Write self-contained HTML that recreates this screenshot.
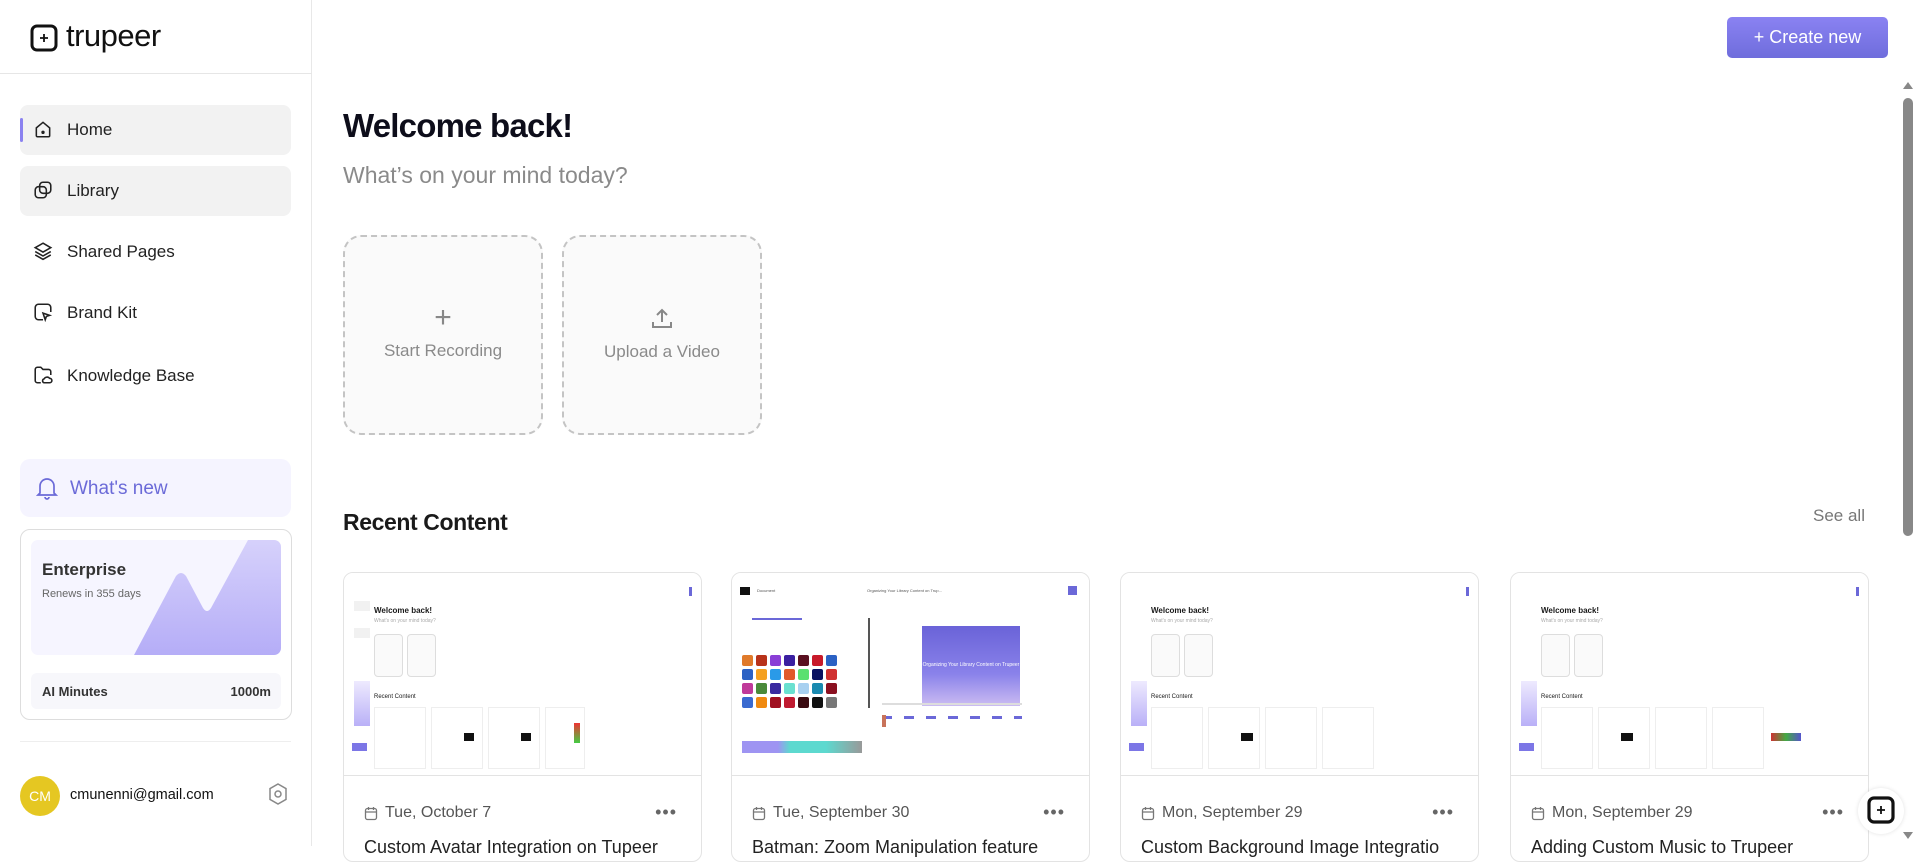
<!DOCTYPE html>
<html><head><meta charset="utf-8"><style>
*{box-sizing:border-box;margin:0;padding:0}
body{width:1920px;height:846px;overflow:hidden;background:#fff;font-family:"Liberation Sans",sans-serif;color:#1a1a1a;position:relative}
.abs{position:absolute}
.side{position:absolute;left:0;top:0;width:312px;height:846px;border-right:1px solid #e8e8e8}
.nav{position:absolute;left:20px;width:271px;height:50px;border-radius:8px;display:flex;align-items:center;padding-left:47px;font-size:17px;color:#222}
.nav svg{position:absolute;left:13px;top:14px}
.box{position:absolute;top:235px;width:200px;height:200px;border:2px dashed #c4c4c4;border-radius:18px;background:#fafafa;color:#8a8a8a;font-size:17px;text-align:center}
.card{position:absolute;top:572px;width:359px;height:290px;border:1px solid #e3e3e3;border-radius:10px;overflow:hidden;background:#fff}
.thumb{position:absolute;left:0;top:0;width:100%;height:203px;border-bottom:1px solid #e3e3e3;background:#fff}
.date{position:absolute;left:20px;top:231px;font-size:16px;color:#555;display:flex;align-items:center;gap:7px}
.dots{position:absolute;right:24px;top:229px;font-size:18px;color:#666;letter-spacing:1px}
.title{position:absolute;left:20px;top:264px;font-size:18px;color:#222;white-space:nowrap}
.t{position:absolute}
.sw{display:grid;grid-template-columns:repeat(7,11px);gap:3px}
.sw i{display:block;height:11px;border-radius:2px}
</style></head><body>

<div class="side">
  <div class="abs" style="left:0;top:73px;width:312px;border-top:1px solid #e6e6e6"></div>
  <svg class="abs" style="left:30px;top:24px" width="28" height="28" viewBox="0 0 28 28"><rect x="2" y="2" width="24" height="24" rx="5" fill="none" stroke="#111" stroke-width="3"/><path d="M14 10v8M10 14h8" stroke="#111" stroke-width="1.8"/></svg>
  <div class="abs" style="left:66px;top:18px;font-size:31px;color:#111;letter-spacing:-0.5px">trupeer</div>

  <div class="nav" style="top:105px;background:#f2f2f2"><svg width="20" height="20" viewBox="0 0 18 18" fill="none" stroke="#222" stroke-width="1.4"><path d="M3 8l6-5 6 5v7a1 1 0 0 1-1 1H4a1 1 0 0 1-1-1z"/><circle cx="9" cy="12" r=".8" fill="#222"/></svg>Home</div>
  <div class="abs" style="left:20px;top:118px;width:3px;height:24px;background:#8b82f0;border-radius:2px"></div>
  <div class="nav" style="top:166px;background:#f2f2f2"><svg width="20" height="20" viewBox="0 0 18 18" fill="none" stroke="#222" stroke-width="1.4"><rect x="6" y="2" width="10" height="10" rx="3"/><rect x="2" y="6" width="10" height="10" rx="3"/></svg>Library</div>
  <div class="nav" style="top:227px"><svg width="20" height="20" viewBox="0 0 18 18" fill="none" stroke="#222" stroke-width="1.4"><path d="M9 2l7 4-7 4-7-4z"/><path d="M2 9.5l7 4 7-4M2 12.5l7 4 7-4"/></svg>Shared Pages</div>
  <div class="nav" style="top:288px"><svg width="20" height="20" viewBox="0 0 18 18" fill="none" stroke="#222" stroke-width="1.4"><path d="M9 16H5a3 3 0 0 1-3-3V5a3 3 0 0 1 3-3h8a3 3 0 0 1 3 3v4"/><path d="M9 10l6 2-3 1-1 3z"/></svg>Brand Kit</div>
  <div class="nav" style="top:351px"><svg width="20" height="20" viewBox="0 0 18 18" fill="none" stroke="#222" stroke-width="1.4"><path d="M7 16H4a2 2 0 0 1-2-2V4a2 2 0 0 1 2-2h3l2 2h5a2 2 0 0 1 2 2v3"/><path d="M10 16h5a2 2 0 0 0 0-4 3 3 0 0 0-5 .5 1.8 1.8 0 0 0 0 3.5z"/></svg>Knowledge Base</div>

  <div class="abs" style="left:20px;top:459px;width:271px;height:58px;border-radius:10px;background:#f5f4ff;color:#6b6ad8;font-size:19px;padding:19px 0 0 50px">What's new
    <svg class="abs" style="left:16px;top:17px" width="22" height="24" viewBox="0 0 22 24" fill="none" stroke="#6b6ad8" stroke-width="1.7"><path d="M4 17V10a7 7 0 0 1 14 0v7l2 2H2z"/><path d="M9 21a2 2 0 0 0 4 0"/></svg></div>

  <div class="abs" style="left:20px;top:529px;width:272px;height:191px;border:1px solid #ddd;border-radius:10px;background:#fff">
    <div class="abs" style="left:10px;top:10px;width:250px;height:115px;border-radius:7px;background:#f6f5ff;overflow:hidden">
      <svg class="abs" style="left:0;top:0" width="250" height="115" viewBox="0 0 250 115"><defs><linearGradient id="g" x1="0" y1="0" x2="0" y2="1"><stop offset="0" stop-color="#d6d1fb"/><stop offset="1" stop-color="#b5adf7"/></linearGradient></defs><path d="M103 115L145 36Q150 30 155 36L172 68Q176 74 180 68L217 0H250V115Z" fill="url(#g)"/></svg>
      <div class="abs" style="left:11px;top:20px;font-size:17px;font-weight:bold;color:#333">Enterprise</div>
      <div class="abs" style="left:11px;top:48px;font-size:11px;color:#666">Renews in 355 days</div>
    </div>
    <div class="abs" style="left:10px;top:143px;width:250px;height:36px;border-radius:6px;background:#f7f7fb;font-size:13px;font-weight:bold;color:#333;padding:11px 10px 0 11px;display:flex;justify-content:space-between"><span>AI Minutes</span><span>1000m</span></div>
  </div>

  <div class="abs" style="left:20px;top:741px;width:271px;border-top:1px solid #eee"></div>
  <div class="abs" style="left:20px;top:776px;width:40px;height:40px;border-radius:50%;background:#e5c722;color:#fff;font-size:14px;text-align:center;line-height:40px">CM</div>
  <div class="abs" style="left:70px;top:787px;font-size:14.5px;color:#111">cmunenni@gmail.com</div>
  <svg class="abs" style="left:267px;top:782px" width="22" height="24" viewBox="0 0 22 24" fill="none" stroke="#888" stroke-width="1.5"><path d="M11 2l8 4.6v10.8L11 22l-8-4.6V6.6z"/><circle cx="11" cy="12" r="3"/></svg>
</div>

<div class="abs" style="left:1727px;top:17px;width:161px;height:41px;border-radius:5px;background:linear-gradient(#8a82f2,#6f6ddc);color:#fff;font-size:18px;text-align:center;line-height:41px">+ Create new</div>

<div class="abs" style="left:343px;top:107px;font-size:33px;font-weight:bold;color:#0d0d1a;letter-spacing:-0.8px">Welcome back!</div>
<div class="abs" style="left:343px;top:162px;font-size:23px;color:#8a8a8a">What’s on your mind today?</div>

<div class="box" style="left:343px"><div style="font-size:30px;color:#888;margin-top:66px;line-height:30px">+</div><div style="margin-top:8px">Start Recording</div></div>
<div class="box" style="left:562px"><svg style="margin-top:70px" width="24" height="24" viewBox="0 0 24 24" fill="none" stroke="#888" stroke-width="2"><path d="M12 15V3M7 8l5-5 5 5M3 15v5h18v-5"/></svg><div style="margin-top:6px">Upload a Video</div></div>

<div class="abs" style="left:343px;top:509px;font-size:23px;font-weight:bold;color:#1a1a1a;letter-spacing:-0.4px">Recent Content</div>
<div class="abs" style="left:1813px;top:506px;font-size:17px;color:#777">See all</div>

<div class="card" style="left:343px">
  <div class="thumb">
    <div class="t" style="left:345px;top:14px;width:3px;height:9px;background:#6b68d8"></div>
    <div class="t" style="left:10px;top:28px;width:16px;height:10px;background:#f1f1f1"></div>
    <div class="t" style="left:10px;top:55px;width:16px;height:10px;background:#f1f1f1"></div>
    <div class="t" style="left:10px;top:108px;width:16px;height:45px;background:linear-gradient(#eeeafe,#b9b0f7)"></div>
    <div class="t" style="left:8px;top:170px;width:15px;height:8px;background:#7c76e6"></div>
    <div class="t" style="left:30px;top:33px;font-size:8px;font-weight:bold">Welcome back!</div>
    <div class="t" style="left:30px;top:45px;font-size:5px;color:#aaa">What's on your mind today?</div>
    <div class="t" style="left:30px;top:61px;width:29px;height:43px;border:1px solid #ddd;border-radius:4px;background:#fafafa"></div>
    <div class="t" style="left:63px;top:61px;width:29px;height:43px;border:1px solid #ddd;border-radius:4px;background:#fafafa"></div>
    <div class="t" style="left:30px;top:121px;font-size:6px">Recent Content</div>
    <div class="t" style="left:30px;top:134px;width:52px;height:62px;border:1px solid #eee"></div>
    <div class="t" style="left:87px;top:134px;width:52px;height:62px;border:1px solid #eee"></div>
    <div class="t" style="left:144px;top:134px;width:52px;height:62px;border:1px solid #eee"></div>
    <div class="t" style="left:201px;top:134px;width:40px;height:62px;border:1px solid #eee"></div>
    <div class="t" style="left:120px;top:160px;width:10px;height:8px;background:#111"></div>
    <div class="t" style="left:177px;top:160px;width:10px;height:8px;background:#111"></div>
    <div class="t" style="left:230px;top:150px;width:6px;height:20px;background:linear-gradient(#e33,#4c4)"></div>
  </div>
  <div class="date"><svg width="14" height="15" viewBox="0 0 14 15" fill="none" stroke="#777" stroke-width="1.3"><rect x="1.5" y="2.5" width="11" height="11" rx="2"/><path d="M1.5 6h11M4.5 1v3M9.5 1v3"/></svg>Tue, October 7</div>
  <div class="dots">•••</div>
  <div class="title">Custom Avatar Integration on Tupeer</div>
</div>

<div class="card" style="left:731px">
  <div class="thumb">
    <div class="t" style="left:8px;top:14px;width:10px;height:8px;background:#111"></div>
    <div class="t" style="left:25px;top:15px;font-size:4px;color:#555">Document</div>
    <div class="t" style="left:135px;top:15px;font-size:4px;color:#555">Organizing Your Library Content on Trup...</div>
    <div class="t" style="left:336px;top:13px;width:9px;height:9px;background:#6b68d8"></div>
    <div class="t" style="left:20px;top:45px;width:50px;height:2px;background:#6b68d8"></div>
    <div class="t" style="left:136px;top:45px;width:2px;height:90px;background:#555"></div>
    <div class="t sw" style="left:10px;top:82px">
      <i style="background:#e07a2a"></i><i style="background:#b8321a"></i><i style="background:#8a3ed6"></i><i style="background:#3a1fa0"></i><i style="background:#5a1020"></i><i style="background:#c81a2a"></i><i style="background:#2b61c4"></i>
      <i style="background:#2b61c4"></i><i style="background:#f5a020"></i><i style="background:#2a9ae8"></i><i style="background:#e05a2a"></i><i style="background:#5ae070"></i><i style="background:#0a1060"></i><i style="background:#d03030"></i>
      <i style="background:#c03a9a"></i><i style="background:#4a8a3a"></i><i style="background:#3a2aa0"></i><i style="background:#6ae0d0"></i><i style="background:#a8d0f0"></i><i style="background:#1a8ab0"></i><i style="background:#8a1020"></i>
      <i style="background:#3a6ad0"></i><i style="background:#f08a10"></i><i style="background:#a01020"></i><i style="background:#c01a30"></i><i style="background:#3a0a10"></i><i style="background:#111"></i><i style="background:#777"></i>
    </div>
    <div class="t" style="left:10px;top:168px;width:120px;height:12px;background:linear-gradient(90deg,#9e94f2 30%,#5dd9cf 40% 70%,#999)"></div>
    <div class="t" style="left:190px;top:53px;width:98px;height:80px;background:linear-gradient(#6a63d8,#8a82ea 60%,#cbbcf2);color:#fff;font-size:5px;text-align:center;padding-top:36px">Organizing Your Library Content on Trupeer</div>
    <div class="t" style="left:150px;top:130px;width:140px;height:2px;background:#ddd"></div>
    <div class="t" style="left:150px;top:143px;width:140px;height:3px;background:repeating-linear-gradient(90deg,#6b68d8 0 10px,transparent 10px 22px)"></div>
    <div class="t" style="left:150px;top:142px;width:4px;height:12px;background:#c8735a"></div>
  </div>
  <div class="date"><svg width="14" height="15" viewBox="0 0 14 15" fill="none" stroke="#777" stroke-width="1.3"><rect x="1.5" y="2.5" width="11" height="11" rx="2"/><path d="M1.5 6h11M4.5 1v3M9.5 1v3"/></svg>Tue, September 30</div>
  <div class="dots">•••</div>
  <div class="title">Batman: Zoom Manipulation feature</div>
</div>

<div class="card" style="left:1120px">
  <div class="thumb">
    <div class="t" style="left:345px;top:14px;width:3px;height:9px;background:#6b68d8"></div>
    <div class="t" style="left:10px;top:108px;width:16px;height:45px;background:linear-gradient(#eeeafe,#b9b0f7)"></div>
    <div class="t" style="left:8px;top:170px;width:15px;height:8px;background:#7c76e6"></div>
    <div class="t" style="left:30px;top:33px;font-size:8px;font-weight:bold">Welcome back!</div>
    <div class="t" style="left:30px;top:45px;font-size:5px;color:#aaa">What's on your mind today?</div>
    <div class="t" style="left:30px;top:61px;width:29px;height:43px;border:1px solid #ddd;border-radius:4px;background:#fafafa"></div>
    <div class="t" style="left:63px;top:61px;width:29px;height:43px;border:1px solid #ddd;border-radius:4px;background:#fafafa"></div>
    <div class="t" style="left:30px;top:121px;font-size:6px">Recent Content</div>
    <div class="t" style="left:30px;top:134px;width:52px;height:62px;border:1px solid #eee"></div>
    <div class="t" style="left:87px;top:134px;width:52px;height:62px;border:1px solid #eee"></div>
    <div class="t" style="left:144px;top:134px;width:52px;height:62px;border:1px solid #eee"></div>
    <div class="t" style="left:201px;top:134px;width:52px;height:62px;border:1px solid #eee"></div>
    <div class="t" style="left:120px;top:160px;width:12px;height:8px;background:#111"></div>
  </div>
  <div class="date"><svg width="14" height="15" viewBox="0 0 14 15" fill="none" stroke="#777" stroke-width="1.3"><rect x="1.5" y="2.5" width="11" height="11" rx="2"/><path d="M1.5 6h11M4.5 1v3M9.5 1v3"/></svg>Mon, September 29</div>
  <div class="dots">•••</div>
  <div class="title">Custom Background Image Integratio</div>
</div>

<div class="card" style="left:1510px">
  <div class="thumb">
    <div class="t" style="left:345px;top:14px;width:3px;height:9px;background:#6b68d8"></div>
    <div class="t" style="left:10px;top:108px;width:16px;height:45px;background:linear-gradient(#eeeafe,#b9b0f7)"></div>
    <div class="t" style="left:8px;top:170px;width:15px;height:8px;background:#7c76e6"></div>
    <div class="t" style="left:30px;top:33px;font-size:8px;font-weight:bold">Welcome back!</div>
    <div class="t" style="left:30px;top:45px;font-size:5px;color:#aaa">What's on your mind today?</div>
    <div class="t" style="left:30px;top:61px;width:29px;height:43px;border:1px solid #ddd;border-radius:4px;background:#fafafa"></div>
    <div class="t" style="left:63px;top:61px;width:29px;height:43px;border:1px solid #ddd;border-radius:4px;background:#fafafa"></div>
    <div class="t" style="left:30px;top:121px;font-size:6px">Recent Content</div>
    <div class="t" style="left:30px;top:134px;width:52px;height:62px;border:1px solid #eee"></div>
    <div class="t" style="left:87px;top:134px;width:52px;height:62px;border:1px solid #eee"></div>
    <div class="t" style="left:144px;top:134px;width:52px;height:62px;border:1px solid #eee"></div>
    <div class="t" style="left:201px;top:134px;width:52px;height:62px;border:1px solid #eee"></div>
    <div class="t" style="left:110px;top:160px;width:12px;height:8px;background:#111"></div>
    <div class="t" style="left:260px;top:160px;width:30px;height:8px;background:linear-gradient(90deg,#c33,#4a4,#55c)"></div>
  </div>
  <div class="date"><svg width="14" height="15" viewBox="0 0 14 15" fill="none" stroke="#777" stroke-width="1.3"><rect x="1.5" y="2.5" width="11" height="11" rx="2"/><path d="M1.5 6h11M4.5 1v3M9.5 1v3"/></svg>Mon, September 29</div>
  <div class="dots">•••</div>
  <div class="title">Adding Custom Music to Trupeer</div>
</div>

<div class="abs" style="left:1903px;top:82px;width:0;height:0;border-left:5px solid transparent;border-right:5px solid transparent;border-bottom:7px solid #888"></div>
<div class="abs" style="left:1903px;top:98px;width:10px;height:438px;border-radius:5px;background:#888"></div>
<div class="abs" style="left:1903px;top:832px;width:0;height:0;border-left:5px solid transparent;border-right:5px solid transparent;border-top:7px solid #888"></div>

<div class="abs" style="left:1858px;top:788px;width:46px;height:46px;border-radius:50%;background:#fff;box-shadow:0 0 4px rgba(0,0,0,.12)"></div>
<svg class="abs" style="left:1866px;top:795px" width="30" height="30" viewBox="0 0 30 30"><rect x="3" y="3" width="24" height="24" rx="5" fill="none" stroke="#111" stroke-width="3.2"/><path d="M15 11v8M11 15h8" stroke="#111" stroke-width="1.8"/></svg>
</body></html>
